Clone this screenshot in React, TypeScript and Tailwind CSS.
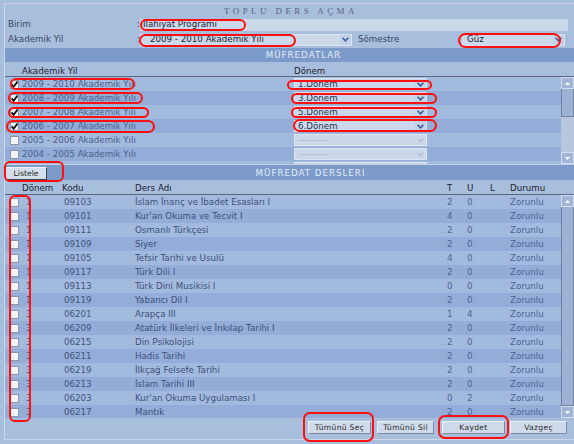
import React from "react";

const years = [
  { y: "2009 - 2010 Akademik Yılı", d: "1.Dönem", c: true },
  { y: "2008 - 2009 Akademik Yılı", d: "3.Dönem", c: true },
  { y: "2007 - 2008 Akademik Yılı", d: "5.Dönem", c: true },
  { y: "2006 - 2007 Akademik Yılı", d: "6.Dönem", c: true },
  { y: "2005 - 2006 Akademik Yılı", d: "", c: false },
  { y: "2004 - 2005 Akademik Yılı", d: "", c: false },
  { y: "2003 - 2004 Akademik Yılı", d: "", c: false },
];

const courses: string[][] = [
  ["1", "09103", "İslam İnanç ve İbadet Esasları I", "2", "0"],
  ["1", "09101", "Kur'an Okuma ve Tecvit I", "4", "0"],
  ["1", "09111", "Osmanlı Türkçesi", "2", "0"],
  ["1", "09109", "Siyer", "2", "0"],
  ["1", "09105", "Tefsir Tarihi ve Usulü", "4", "0"],
  ["1", "09117", "Türk Dili I", "2", "0"],
  ["1", "09113", "Türk Dini Musikisi I", "0", "0"],
  ["1", "09119", "Yabancı Dil I", "2", "0"],
  ["3", "06201", "Arapça III", "1", "4"],
  ["3", "06209", "Atatürk İlkeleri ve İnkılap Tarihi I", "2", "0"],
  ["3", "06215", "Din Psikolojisi", "2", "0"],
  ["3", "06211", "Hadis Tarihi", "2", "0"],
  ["3", "06219", "İlkçağ Felsefe Tarihi", "2", "0"],
  ["3", "06213", "İslam Tarihi III", "2", "0"],
  ["3", "06203", "Kur'an Okuma Uygulaması I", "0", "2"],
  ["3", "06217", "Mantık", "2", "0"],
];

function Chevron({ color }: { color: string }) {
  return (
    <svg width="7" height="5" viewBox="0 0 7 5">
      <path d="M0.6 0.8 L3.5 3.8 L6.4 0.8" fill="none" stroke={color} strokeWidth="1.5" />
    </svg>
  );
}

function Check({ checked }: { checked?: boolean }) {
  return (
    <span className="relative block h-[9px] w-[9px] shrink-0 border border-[#8c97a8] bg-[#f2f4f8]">
      {checked && (
        <svg viewBox="0 0 9 9" className="absolute -left-[1px] -top-[1px] h-[9px] w-[9px]">
          <path d="M1.6 4.4 L3.6 6.8 L7.6 1.6" fill="none" stroke="#000" strokeWidth="1.7" />
        </svg>
      )}
    </span>
  );
}

function ScrollBtn({ down }: { down?: boolean }) {
  return (
    <div className="flex h-[12px] w-full shrink-0 items-center justify-center border border-[#d3deed] bg-[#a0b5d7]">
      <svg width="5" height="3" viewBox="0 0 5 3">
        <path d={down ? "M0 0 H5 L2.5 3 Z" : "M0 3 H5 L2.5 0 Z"} fill="#ffffff" />
      </svg>
    </div>
  );
}

function Oval({ c }: { c: string }) {
  return <div className={"pointer-events-none absolute border-2 border-[#ff1010] " + c} />;
}

export default function App() {
  return (
    <div className="relative h-[444px] w-[574px] overflow-hidden bg-[#a8bedd] pl-[4px] pt-[3px] text-[8.7px] leading-none text-[#3a4760] [font-family:'DejaVu_Sans',sans-serif]">
      <div className="flex h-[437px] flex-col border-y border-l border-[#cad7ea]">
        {/* title */}
        <div className="flex h-[13px] items-center justify-center pl-[3px] pt-[1px] text-[9px] tracking-[3.4px] text-[#56647a] [font-family:'Liberation_Serif',serif]">
          <span>TOPLU DERS AÇMA</span>
        </div>
        {/* Birim */}
        <div className="flex h-[15px] items-center">
          <span className="w-[132px] pl-[3px]">Birim</span>
          <span className="w-[3px]">:</span>
          <div className="flex h-[12px] w-[428px] items-center bg-[#ccd9eb] pl-[3px] text-[#1c2231]">İlahiyat Programı</div>
        </div>
        {/* Akademik yil */}
        <div className="flex h-[15px] items-center">
          <span className="w-[132px] pl-[3px]">Akademik Yil</span>
          <span className="w-[3px]">:</span>
          <div className="flex h-[12px] w-[212px] items-center border border-[#d9e2ef] bg-[#ccd9eb]">
            <span className="flex-1 pl-[9px] text-[#1c2231]">2009 - 2010 Akademik Yılı</span>
            <span className="flex h-full w-[11px] items-center justify-center bg-[#c2d1e8]">
              <Chevron color="#3b5d9e" />
            </span>
          </div>
          <span className="w-[110px] pl-[6px]">Sömestre</span>
          <div className="flex h-[12px] w-[103px] items-center border border-[#d9e2ef] bg-[#ccd9eb]">
            <span className="flex-1 pl-[4px] text-[#1c2231]">Güz</span>
            <span className="flex h-full w-[11px] items-center justify-center bg-[#c2d1e8]">
              <Chevron color="#3b5d9e" />
            </span>
          </div>
        </div>
        <div className="h-[1px]" />
        {/* MÜFREDATLAR bar */}
        <div className="flex h-[14px] items-center justify-center bg-[#7c9bcb] pl-[28px] pt-[1px] tracking-[1px] text-[#e4ebf6]">
          <span>MÜFREDATLAR</span>
        </div>
        {/* header 1 */}
        <div className="flex h-[14px] items-center pt-[4px] text-[#1c2230]">
          <span className="w-[289px] pl-[17px]">Akademik Yil</span>
          <span>Dönem</span>
        </div>
        {/* listbox */}
        <div className="flex h-[88px] border-t border-[#5c6880]">
          <div className="flex flex-1 flex-col overflow-hidden">
            {years.map((r, i) => (
              <div
                key={r.y}
                className={"flex h-[14px] shrink-0 items-center " + (i % 2 === 0 ? "bg-[#a3badf]" : "bg-[#93acd8]")}
              >
                <span className="ml-[5px]">
                  <Check checked={r.c} />
                </span>
                <span className="ml-[3px] w-[272px] text-[#4b5f88]">{r.y}</span>
                {r.d ? (
                  <div className="flex h-[12px] w-[133px] items-center border border-[#dbe3ef] bg-[#cbd8ec]">
                    <span className="flex-1 pl-[3px] text-[#28324a]">{r.d}</span>
                    <span className="flex h-full w-[12px] items-center justify-center bg-[#c3d2e9]">
                      <Chevron color="#34579b" />
                    </span>
                  </div>
                ) : (
                  <div className="flex h-[12px] w-[133px] items-center border border-[#dde4ee] bg-[#ccd8ea]">
                    <span className="flex-1 pl-[3px] text-[#a4b3ca]">----------</span>
                    <span className="flex h-full w-[12px] items-center justify-center">
                      <Chevron color="#b3bfd0" />
                    </span>
                  </div>
                )}
              </div>
            ))}
          </div>
          <div className="flex w-[13px] flex-col bg-[#b8c7de]">
            <ScrollBtn />
            <div className="h-[28px] border-x border-b border-[#6f82a2] bg-[#9db2d4]" />
            <div className="flex-1" />
            <ScrollBtn down />
          </div>
        </div>
        {/* MÜFREDAT DERSLERI bar */}
        <div className="flex h-[16px] items-end border-t border-[#c3d1e6] bg-[#7c9bcb]">
          <button className="flex h-[13px] w-[42px] items-center justify-center border border-b-[#3f4550] border-l-[#eef2f8] border-r-[#3f4550] border-t-[#eef2f8] bg-[#d5deeb] text-[7.7px] leading-none text-[#222]">
            Listele
          </button>
          <div className="flex h-[15px] flex-1 items-center justify-center pt-[2px] tracking-[1px] text-[#e4ebf6]">
            <span>MÜFREDAT DERSLERI</span>
          </div>
        </div>
        {/* header 2 */}
        <div className="flex h-[14px] items-center pt-[3px] text-[#1c2230]">
          <span className="w-[57px] pl-[17px]">Dönem</span>
          <span className="w-[73px]">Kodu</span>
          <span className="w-[312px]">Ders Adı</span>
          <span className="w-[20px]">T</span>
          <span className="w-[23px]">U</span>
          <span className="w-[20px]">L</span>
          <span>Durumu</span>
        </div>
        {/* grid */}
        <div className="flex h-[224px] border-t border-[#5c6880]">
          <div className="flex flex-1 flex-col overflow-hidden">
            {courses.map((c, i) => (
              <div
                key={c[1]}
                className={"flex h-[14px] shrink-0 items-center " + (i % 2 === 0 ? "bg-[#a3badf]" : "bg-[#93acd8]")}
              >
                <span className="w-[17px] pl-[5px]">
                  <Check />
                </span>
                <span className="w-[42px] pl-[4px] text-[#40547c]">{c[0]}</span>
                <span className="w-[71px] text-[#40547c]">{c[1]}</span>
                <span className="w-[312px] text-[#3d507a]">{c[2]}</span>
                <span className="w-[20px] text-[#4d6494]">{c[3]}</span>
                <span className="w-[43px] text-[#4d6494]">{c[4]}</span>
                <span className="text-[#4d6494]">Zorunlu</span>
              </div>
            ))}
          </div>
          <div className="flex w-[13px] flex-col bg-[#b8c7de]">
            <ScrollBtn />
            <div className="flex-1 border-x border-b border-[#6f82a2] bg-[#9db2d4]" />
            <ScrollBtn down />
          </div>
        </div>
        {/* buttons */}
        <div className="flex h-[21px] items-start justify-end pr-[7px] pt-[3px] text-[7.6px] text-[#2a2a2a]">
          <button className="flex h-[13px] w-[63px] items-center justify-center border border-b-[#7d8aa1] border-l-[#eaf0f7] border-r-[#7d8aa1] border-t-[#eaf0f7] bg-[#cfdaeb] tracking-[0.3px]">
            Tümünü Seç
          </button>
          <button className="ml-[6px] flex h-[13px] w-[57px] items-center justify-center border border-b-[#7d8aa1] border-l-[#eaf0f7] border-r-[#7d8aa1] border-t-[#eaf0f7] bg-[#cfdaeb] tracking-[0.3px]">
            Tümünü Sil
          </button>
          <button className="ml-[8px] flex h-[13px] w-[63px] items-center justify-center border border-b-[#7d8aa1] border-l-[#eaf0f7] border-r-[#7d8aa1] border-t-[#eaf0f7] bg-[#cfdaeb] tracking-[0.3px]">
            Kaydet
          </button>
          <button className="ml-[5px] flex h-[13px] w-[57px] items-center justify-center border border-b-[#7d8aa1] border-l-[#eaf0f7] border-r-[#7d8aa1] border-t-[#eaf0f7] bg-[#cfdaeb] tracking-[0.3px]">
            Vazgeç
          </button>
        </div>
      </div>

      {/* red annotation outlines */}
      <Oval c="left-[140px] top-[19px] h-[12px] w-[106px] rounded-full" />
      <Oval c="left-[139px] top-[34px] h-[13px] w-[157px] rounded-full" />
      <Oval c="left-[458px] top-[33px] h-[15px] w-[103px] rounded-full" />
      <Oval c="left-[10px] top-[78px] h-[12px] w-[125px] rounded-full" />
      <Oval c="left-[8px] top-[92px] h-[12px] w-[135px] rounded-full" />
      <Oval c="left-[8px] top-[107px] h-[11px] w-[141px] rounded-full" />
      <Oval c="left-[6px] top-[120px] h-[13px] w-[149px] rounded-full" />
      <Oval c="left-[287px] top-[80px] h-[10px] w-[145px] rounded-full" />
      <Oval c="left-[291px] top-[93px] h-[11px] w-[146px] rounded-full" />
      <Oval c="left-[291px] top-[107px] h-[11px] w-[146px] rounded-full" />
      <Oval c="left-[293px] top-[119px] h-[13px] w-[144px] rounded-full" />
      <Oval c="left-[4px] top-[161px] h-[21px] w-[60px] rounded-[6px]" />
      <Oval c="left-[9px] top-[195px] h-[227px] w-[22px] rounded-[6px]" />
      <Oval c="left-[303px] top-[412px] h-[30px] w-[71px] rounded-[7px]" />
      <Oval c="left-[438px] top-[415px] h-[24px] w-[71px] rounded-[7px]" />
    </div>
  );
}
